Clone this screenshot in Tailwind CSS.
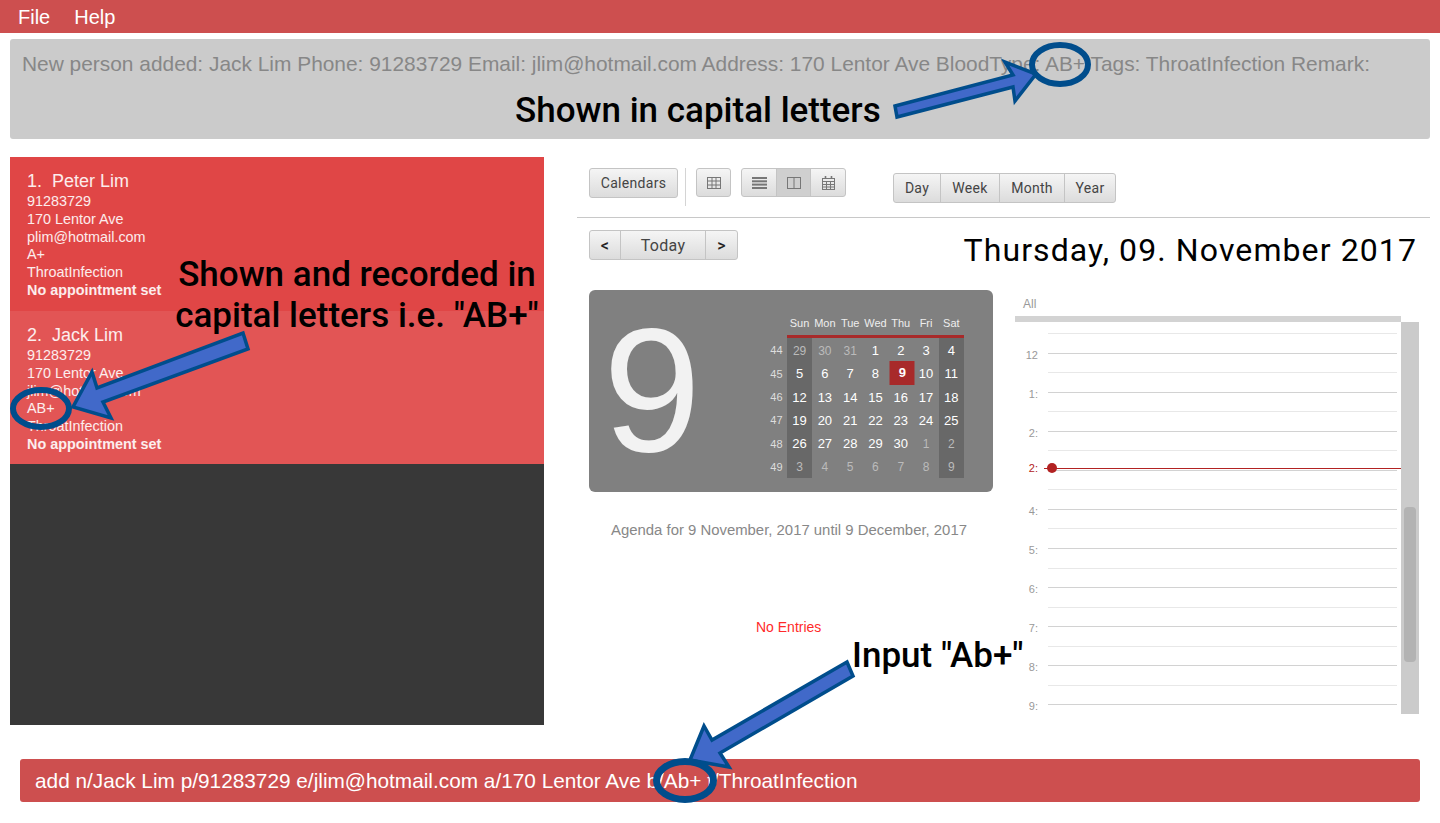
<!DOCTYPE html>
<html lang="en">
<head>
  <meta charset="UTF-8" />
  <title>Address Book</title>
  <script src="https://cdn.jsdelivr.net/npm/@tailwindcss/browser@4"></script>
</head>
<body class="bg-white font-['Liberation_Sans',sans-serif] overflow-hidden">
<div class="relative w-[1440px] h-[823px]">

  <!-- Menu -->
  <div class="h-[33px] bg-[#cd4f4f] flex items-center pl-[18px] gap-[24px] text-white text-[20px] leading-none">
    <span>File</span>
    <span>Help</span>
  </div>

  <!-- Result box -->
  <div class="mt-[6px] ml-[10px] w-[1420px] h-[100px] bg-[#cbcbcb] rounded-[3px] pl-[12px] pt-[13px] text-[#878787] text-[20.9px] leading-[24px] whitespace-nowrap">
    New person added: Jack Lim Phone: 91283729 Email: jlim@hotmail.com Address: 170 Lentor Ave BloodType: AB+ Tags: ThroatInfection Remark:
  </div>

  <div class="mt-[18px] flex h-[568px]">
    <!-- Person list -->
    <div class="ml-[10px] w-[534px] bg-[#383838] text-white/90 text-[14.4px] leading-[17.8px]">
      <div class="h-[154px] bg-[#e04646] pl-[17px] pt-[14px]">
        <p class="text-[18px] leading-[20px] mb-[2px] whitespace-pre">1.  Peter Lim</p>
        <p>91283729</p>
        <p>170 Lentor Ave</p>
        <p>plim@hotmail.com</p>
        <p>A+</p>
        <p>ThroatInfection</p>
        <p class="font-bold">No appointment set</p>
      </div>
      <div class="h-[153px] bg-[#e25555] pl-[17px] pt-[14px]">
        <p class="text-[18px] leading-[20px] mb-[2px] whitespace-pre">2.  Jack Lim</p>
        <p>91283729</p>
        <p>170 Lentor Ave</p>
        <p>jlim@hotmail.com</p>
        <p>AB+</p>
        <p>ThroatInfection</p>
        <p class="font-bold">No appointment set</p>
      </div>
    </div>

    <!-- Calendar -->
    <div class="ml-[33px] w-[853px] font-['Roboto',sans-serif]">
      <div class="h-[61px] border-b border-[#c8c8c8] pl-[12px] pt-[11px] flex items-start text-[14px] text-[#444] tracking-[0.3px]">
        <button class="w-[89px] h-[30px] rounded-[3px] border border-[#c4c4c4] bg-linear-to-b from-[#f5f5f5] to-[#dcdcdc]">Calendars</button>
        <div class="ml-[7px] w-[1px] h-[38px] bg-[#d4d4d4]"></div>
        <button class="ml-[10px] w-[35px] h-[29px] rounded-[3px] border border-[#c4c4c4] bg-linear-to-b from-[#f5f5f5] to-[#dcdcdc] flex items-center justify-center">
          <svg width="14" height="12" viewBox="0 0 14 12" fill="none" stroke="#777" stroke-width="1"><rect x="0.5" y="0.5" width="13" height="11" /><path d="M0 4h14M0 8h14M5 0v12M9 0v12" /></svg>
        </button>
        <div class="ml-[10px] h-[29px] flex rounded-[3px] border border-[#c4c4c4] overflow-hidden bg-linear-to-b from-[#f5f5f5] to-[#dcdcdc]">
          <div class="w-[34px] flex items-center justify-center">
            <svg width="15" height="12" viewBox="0 0 15 12" fill="#777"><rect width="15" height="2" /><rect y="3.3" width="15" height="2" /><rect y="6.6" width="15" height="2" /><rect y="10" width="15" height="2" /></svg>
          </div>
          <div class="w-[35px] flex items-center justify-center border-x border-[#c4c4c4] bg-[#cfcfcf]">
            <svg width="14" height="12" viewBox="0 0 14 12" fill="none" stroke="#777"><rect x="0.5" y="0.5" width="13" height="11" /><path d="M7 0v12" /></svg>
          </div>
          <div class="w-[34px] flex items-center justify-center">
            <svg width="13" height="14" viewBox="0 0 13 14" fill="none" stroke="#777"><rect x="0.5" y="2.5" width="12" height="11" /><path d="M0 5.5h13M0 8.5h13M0 11h13M4.5 5v9M8.5 5v9" /><path d="M3.5 0v3M9.5 0v3" stroke-width="1.6" /></svg>
          </div>
        </div>
        <div class="ml-[47px] mt-[5px] h-[30px] flex items-stretch rounded-[3px] border border-[#c4c4c4] bg-linear-to-b from-[#f5f5f5] to-[#dcdcdc]">
          <span class="w-[46px] flex items-center justify-center">Day</span>
          <span class="w-[59px] flex items-center justify-center border-l border-[#c4c4c4]">Week</span>
          <span class="w-[65px] flex items-center justify-center border-l border-[#c4c4c4]">Month</span>
          <span class="w-[51px] flex items-center justify-center border-l border-[#c4c4c4]">Year</span>
        </div>
      </div>

      <div class="h-[72px] pl-[12px] pr-[13px] pt-[12px] flex justify-between items-start">
        <div class="h-[30px] flex rounded-[3px] border border-[#c4c4c4] bg-linear-to-b from-[#f5f5f5] to-[#dcdcdc] text-[#444] text-[16px] tracking-[0.3px]">
          <span class="w-[30px] pt-[1px] flex items-center justify-center font-medium text-[#222]">&lt;</span>
          <span class="w-[86px] pt-[1px] flex items-center justify-center border-x border-[#c4c4c4]">Today</span>
          <span class="w-[31px] pt-[1px] flex items-center justify-center font-medium text-[#222]">&gt;</span>
        </div>
        <div class="text-[32px] leading-[40px] text-black tracking-[1.1px] whitespace-nowrap">Thursday, 09. November 2017</div>
      </div>

      <div class="flex">
        <!-- Month box + agenda -->
        <div class="ml-[12px] w-[404px] font-['Liberation_Sans',sans-serif]">
          <div class="h-[202px] bg-[#808080] rounded-[6px] flex justify-between pr-[29px]">
            <div class="pl-[14px] pt-[5px] text-[176px] leading-[190px] text-[#f2f2f2]">9</div>
            <div id="month" class="mt-[26px] h-[162px] grid grid-cols-[21px_repeat(7,25.3px)] grid-rows-[19px_3px_repeat(6,23.34px)] text-white"></div>
          </div>
          <p class="mt-[29px] pr-[4px] text-center text-[14.9px] leading-[18px] text-[#888]">Agenda for 9 November, 2017 until 9 December, 2017</p>
          <p class="mt-[79px] ml-[167px] text-[14px] leading-[18px] text-[#ff2a2a]">No Entries</p>
        </div>

        <!-- Day view -->
        <div class="ml-[22px] w-[404px]">
          <div class="h-[26px] pl-[8px] pt-[7px] font-['Liberation_Sans',sans-serif] text-[12px] leading-[14px] text-[#999]">All</div>
          <div class="w-[386px] h-[6px] bg-[#d3d3d3]"></div>
          <div class="relative flex h-[392px]">
            <div id="hours" class="w-[386px] font-['Liberation_Sans',sans-serif]"></div>
            <div class="w-[18px] bg-[#cbcbcb] pt-[185px] px-[3px]">
              <div class="h-[155px] rounded-[4px] bg-[#b3b3b3]"></div>
            </div>
            <!-- now marker -->
            <div class="absolute left-[29px] top-[145.5px] w-[357px] h-[1px] bg-[#b22222]"></div>
            <div class="absolute left-[32px] top-[141px] w-[10px] h-[10px] rounded-full bg-[#b22222]"></div>
          </div>
        </div>
      </div>
    </div>
  </div>

  <!-- Command box -->
  <div class="mt-[34px] ml-[20px] w-[1400px] h-[43px] bg-[#cd4f4f] rounded-[3px] pl-[15px] flex items-center text-white text-[20.8px] whitespace-nowrap">
    add n/Jack Lim p/91283729 e/jlim@hotmail.com a/170 Lentor Ave b/Ab+ t/ThroatInfection
  </div>

  <!-- Annotations -->
  <svg class="absolute left-0 top-0 pointer-events-none" width="1440" height="823" viewBox="0 0 1440 823" fill="none">
    <g stroke="#004d8c">
      <polygon fill="#4169c9" stroke-width="3.5" points="895,106 1013,75 1005,62 1036,74 1015,101 1013,87 897,117" />
      <polygon fill="#4169c9" stroke-width="3.5" points="243,333 248,349 103,402 111,418 73,407 92,372 97,388" />
      <polygon fill="#4169c9" stroke-width="3.5" points="847,662 853,676 720,753 729,767 690,760 704,726 712,740" />
      <ellipse cx="1060" cy="64.5" rx="28" ry="19.5" stroke-width="6" />
      <ellipse cx="41" cy="408.5" rx="28" ry="18.5" stroke-width="6" />
      <ellipse cx="685" cy="780.5" rx="28.5" ry="19" stroke-width="7" />
    </g>
  </svg>
  <div class="absolute left-[515px] top-[90px] text-[35px] leading-[42px] font-medium font-['Roboto',sans-serif] text-black whitespace-nowrap">Shown in capital letters</div>
  <div class="absolute left-[174px] top-[254px] w-[366px] text-center text-[35px] leading-[41px] font-medium font-['Roboto',sans-serif] text-black whitespace-nowrap">Shown and recorded in<br>capital letters i.e. "AB+"</div>
  <div class="absolute left-[852px] top-[635px] text-[35px] leading-[42px] font-medium font-['Roboto',sans-serif] text-black whitespace-nowrap">Input "Ab+"</div>
</div>

<script>
  // mini month
  const month = document.getElementById('month');
  const add = (parent, cls, text) => {
    const el = document.createElement('div');
    el.className = cls;
    el.textContent = text;
    parent.appendChild(el);
  };
  add(month, '', '');
  ['Sun', 'Mon', 'Tue', 'Wed', 'Thu', 'Fri', 'Sat'].forEach(d => {
    add(month, 'text-[11px] leading-[14px] text-center text-[#eee]', d);
  });
  add(month, '', '');
  add(month, 'col-span-7 bg-[#a82a2a]', '');

  const weeks = [
    [44, 29, 30, 31, 1, 2, 3, 4],
    [45, 5, 6, 7, 8, 9, 10, 11],
    [46, 12, 13, 14, 15, 16, 17, 18],
    [47, 19, 20, 21, 22, 23, 24, 25],
    [48, 26, 27, 28, 29, 30, 1, 2],
    [49, 3, 4, 5, 6, 7, 8, 9],
  ];
  weeks.forEach((w, r) => {
    add(month, 'text-[11px] flex items-center justify-center text-[#ddd] translate-y-[1px]', w[0]);
    w.slice(1).forEach((day, c) => {
      const other = (r === 0 && c < 3) || (r === 4 && c > 4) || r === 5;
      const today = r === 1 && c === 4;
      let cls = 'flex items-center justify-center text-[13px] pt-[2px]';
      if (other) cls = 'flex items-center justify-center text-[12px] text-[#bbb] pt-[2px]';
      if (today) cls = 'flex items-center justify-center text-[13px] font-bold bg-[#a82a2a] translate-x-[1.5px]';
      if (c === 0 || c === 6) cls += ' bg-[#686868]';
      add(month, cls, day);
    });
  });

  // hour rows
  const hours = document.getElementById('hours');
  const labels = ['12', '1:', '2:', '2:', '4:', '5:', '6:', '7:', '8:', '9:'];
  const row = (h, dark, label, red) => {
    const el = document.createElement('div');
    el.className = 'flex items-end';
    el.style.height = h + 'px';
    const lab = document.createElement('div');
    lab.className = 'w-[33px] pr-[10px] text-right text-[11px] leading-none translate-y-[7px] text-[#999]';
    if (red) lab.className = 'w-[33px] pr-[10px] text-right text-[11px] leading-none translate-y-[3px] text-[#b22222]';
    lab.textContent = label;
    const line = document.createElement('div');
    line.className = dark ? 'flex-1 mr-[4px] border-b border-[#d2d2d2]' : 'flex-1 mr-[4px] border-b border-[#e8e8e8]';
    el.append(lab, line);
    hours.appendChild(el);
  };
  row(12, false, '');
  labels.forEach((l, i) => {
    row(19.55, true, l, i === 3);
    if (i < labels.length - 1) row(19.55, false, '');
  });
</script>
</body>
</html>
